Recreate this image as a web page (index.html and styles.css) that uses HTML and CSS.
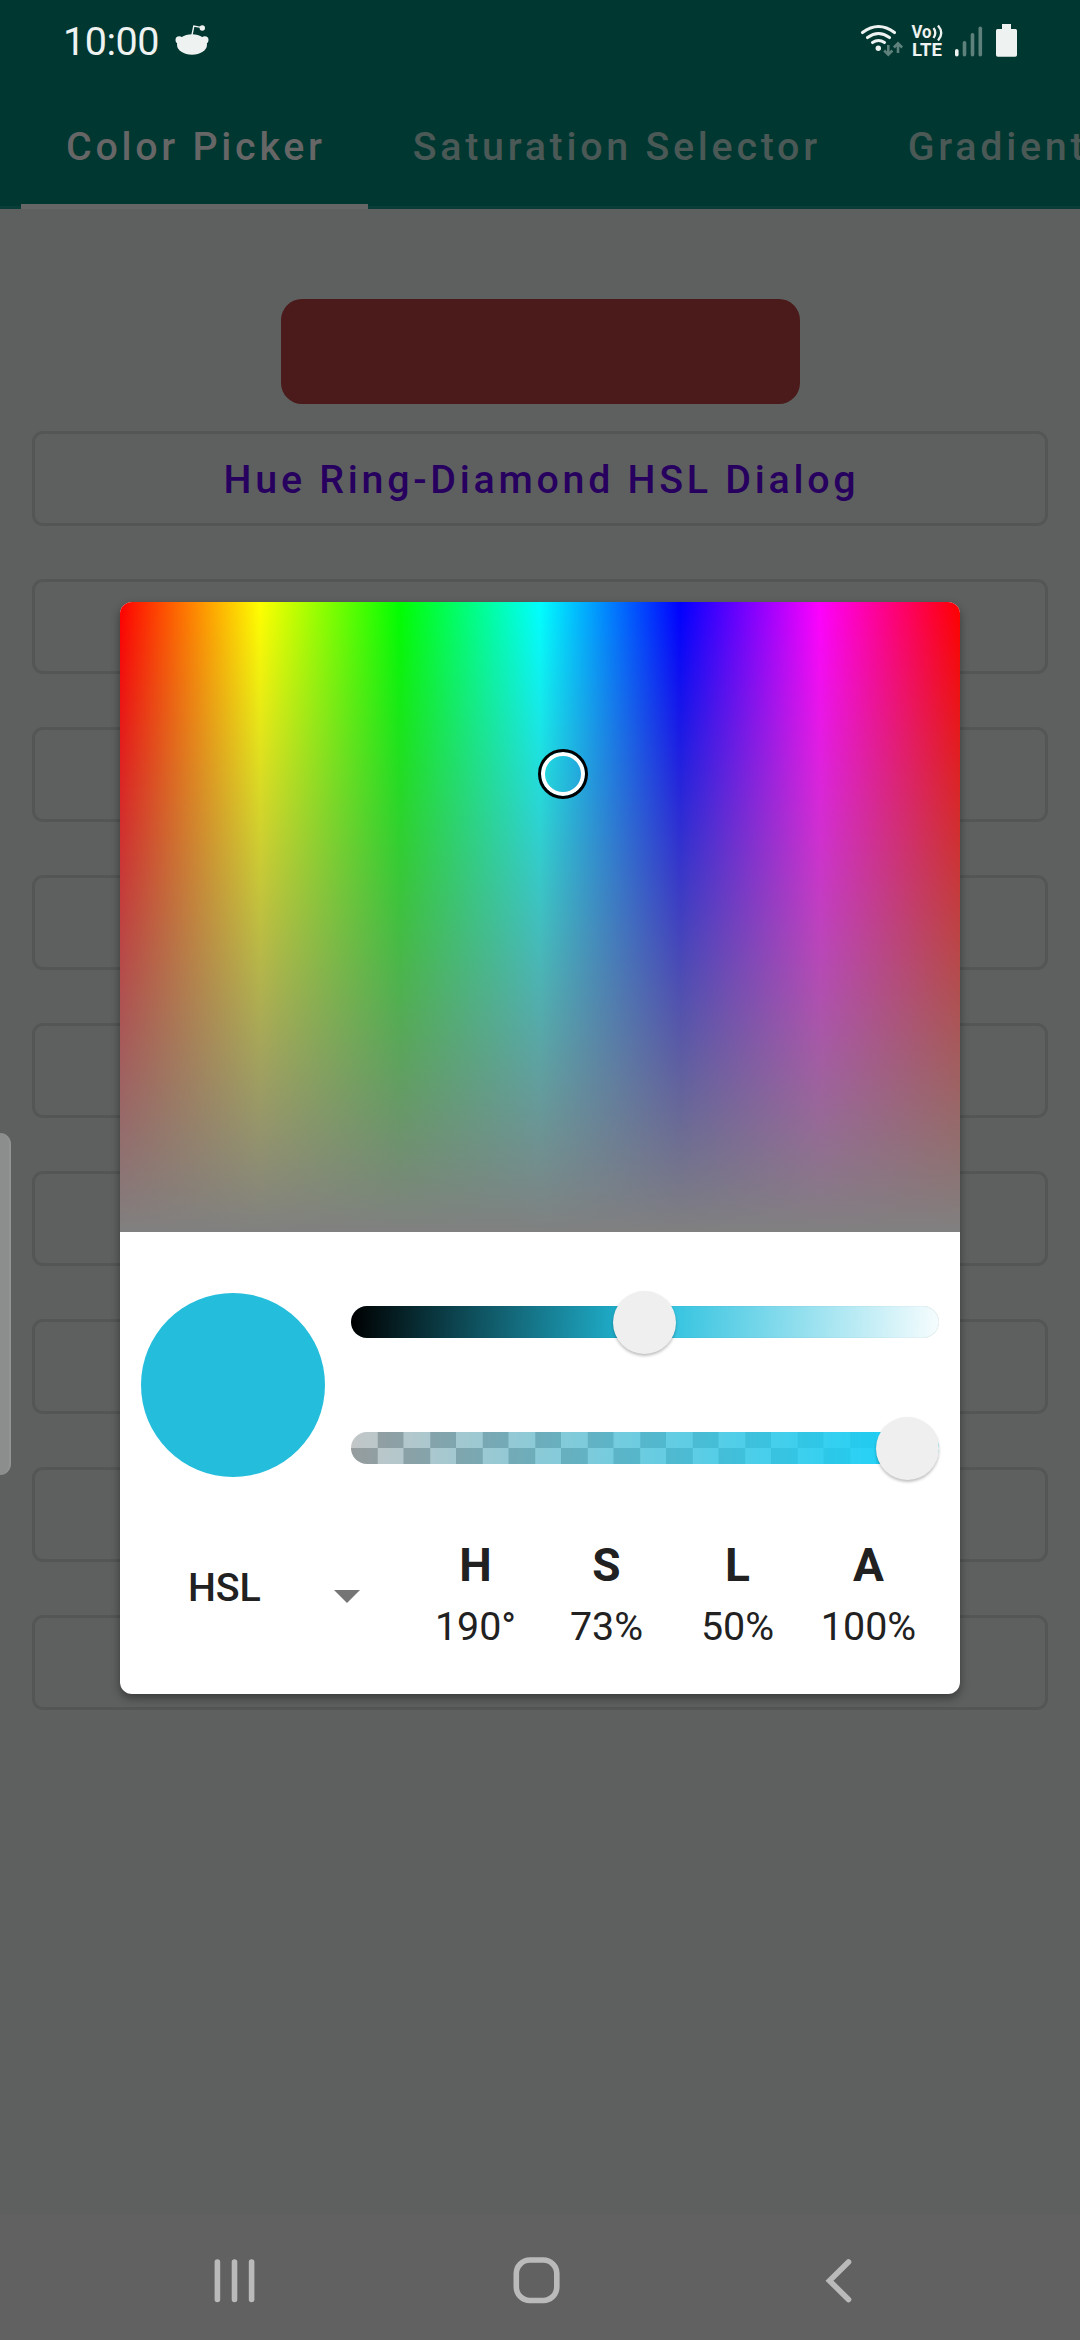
FILE: index.html
```html
<!DOCTYPE html>
<html lang="en">
<head>
<meta charset="utf-8">
<title>Color Picker</title>
<link rel="stylesheet" href="styles.css">
</head>
<body>
<div class="screen">
  <header class="appbar">
    <div class="statusbar">
      <span class="clock">10:00</span>
      <svg class="reddit" width="34" height="32" viewBox="0 0 34 32">
        <ellipse cx="17" cy="20.500" rx="15" ry="10.300" fill="#eef2f0"/>
        <circle cx="4.200" cy="16" r="3.700" fill="#eef2f0"/><circle cx="29.800" cy="16" r="3.700" fill="#eef2f0"/>
        <path d="M17 11 L18.800 2 L26 3.400" fill="none" stroke="#eef2f0" stroke-width="1.400"/>
        <circle cx="27.300" cy="4" r="2.700" fill="#eef2f0"/>
      </svg>
      <svg class="system" width="160" height="46" viewBox="860 14 160 46">
        <g fill="none" stroke="#eef2f0" stroke-width="3.100" stroke-linecap="round">
          <path d="M862.500 32.500 Q878.500 20.500 894.500 32.500"/>
          <path d="M867.500 37.500 Q878.500 29.500 889.500 37.500"/>
          <path d="M872.500 42.500 Q878.500 38.500 884.500 42.500"/>
        </g>
        <circle cx="878.300" cy="48.300" r="2.700" fill="#eef2f0"/>
        <g fill="none" stroke="#5f817c" stroke-width="2.600">
          <path d="M888.300 45 V54 M884.200 50.500 L888.300 54.600 L892.400 50.500"/>
          <path d="M898 53 V44 M893.900 47.500 L898 43.400 L902.100 47.500"/>
        </g>
        <text class="net" x="911.500" y="38.200" textLength="20" lengthAdjust="spacingAndGlyphs">Vo</text>
        <text class="net" x="912" y="55.800" textLength="30" lengthAdjust="spacingAndGlyphs">LTE</text>
        <g fill="none" stroke="#eef2f0" stroke-width="2.300"><path d="M933.500 28 Q937 32.500 933.500 38"/><path d="M938 25.500 Q944.500 33 938 40.500"/></g>
        <rect x="955" y="49" width="3.600" height="7.500" rx="1.800" fill="#eef2f0"/>
        <g fill="#5f817c"><rect x="962.700" y="41" width="3.600" height="15.500" rx="1.800"/><rect x="970.700" y="33" width="3.600" height="23.500" rx="1.800"/><rect x="978.500" y="26.500" width="3.600" height="30" rx="1.800"/></g>
        <path d="M1002 24 h9 v5 h4.500 q1.500 0 1.500 1.500 v24.500 q0 1.800 -1.800 1.800 h-17.400 q-1.800 0 -1.800 -1.800 v-24.500 q0 -1.500 1.500 -1.500 h4.500 z" fill="#eef2f0"/>
      </svg>
    </div>
    <nav class="tabs">
      <div class="tab selected">Color Picker</div>
      <div class="tab">Saturation Selector</div>
      <div class="tab">Gradient</div>
    </nav>
  </header>
  <main class="content">
    <div class="preview"></div>
    <div class="button">Hue Ring-Diamond HSL Dialog</div>
    <div class="button"></div><div class="button"></div><div class="button"></div><div class="button"></div>
    <div class="button"></div><div class="button"></div><div class="button"></div><div class="button"></div>
  </main>
  <footer class="navbar">
    <svg width="1080" height="126" viewBox="0 2214 1080 126" fill="none" stroke="#bababa" stroke-width="5.600" stroke-linecap="round">
      <path d="M217.400 2262 V2299.500 M234.500 2262 V2299.500 M251.600 2262 V2299.500"/>
      <rect x="516.300" y="2260" width="40.500" height="40.500" rx="13.500"/>
      <path d="M848.500 2262 L829.500 2280.700 L848.500 2299.500"/>
    </svg>
  </footer>
</div>
<div class="edge-handle"></div>
<section class="dialog">
  <div class="field"><div class="selector"></div></div>
  <div class="controls">
    <div class="swatch"></div>
    <div class="sliders">
      <div class="track lightness"><div class="thumb mid"></div></div>
      <div class="track alpha"><div class="thumb end"></div></div>
    </div>
  </div>
  <div class="values">
    <div class="mode"><span>HSL</span><svg width="26" height="13" viewBox="0 0 26 13"><path d="M0 0 H26 L13 13 Z" fill="#757575"/></svg></div>
    <div class="channel"><b>H</b><span>190°</span></div>
    <div class="channel"><b>S</b><span>73%</span></div>
    <div class="channel"><b>L</b><span>50%</span></div>
    <div class="channel"><b>A</b><span>100%</span></div>
  </div>
</section>
</body>
</html>
```
FILE: styles.css
```css
* { box-sizing: border-box; }
body { margin: 0; width: 1080px; height: 2340px; overflow: hidden; position: relative; font-family: Roboto, sans-serif; background: #5e605f; }
.screen { height: 2340px; display: flex; flex-direction: column; }
.appbar { height: 209px; background: #003731; box-shadow: inset 0 -3px #0a3d37; display: flex; flex-direction: column; }
.statusbar { height: 84px; display: flex; align-items: flex-start; padding: 14px 60px 0 63px; }
.clock { font-size: 39.500px; line-height: 48px; color: #eef2f0; width: 112px; letter-spacing: -.5px; margin-top: 4px; }
.reddit { margin-top: 10px; }
.system { margin-left: auto; }
.net { font: 700 17.500px Roboto, sans-serif; fill: #eef2f0; }
.tabs { flex: 1; display: flex; padding-left: 21px; overflow: hidden; white-space: nowrap; }
.tab { flex: none; padding: 0 42px 0 45px; line-height: 125px; font-size: 39.400px; font-weight: 500; letter-spacing: 3.720px; color: #4b5956; }
.selected { color: #666; box-shadow: inset 0 -5px #666; }
.content { flex: 1; display: flex; flex-direction: column; align-items: center; padding-top: 90px; }
.preview { width: 519px; height: 105px; border-radius: 21px; background: #4b1a1a; margin-bottom: 27px; }
.button { width: 1016px; height: 95px; margin-bottom: 53px; padding-left: 3px; border: 3px solid #545655; border-radius: 11px; text-align: center; line-height: 91px; font-size: 39.400px; font-weight: 500; letter-spacing: 3.720px; color: #27005f; }
.navbar { height: 126px; background: #616161; }
.navbar svg { display: block; }
.edge-handle { position: absolute; left: 0; top: 1133px; width: 11px; height: 342px; border-radius: 0 11px 11px 0; background: #8c8e8d; border-right: 2px solid #929493; }
.dialog { position: absolute; left: 120px; top: 602px; width: 840px; height: 1092px; background: #fff; border-radius: 12px; overflow: hidden; box-shadow: 0 4px 10px rgba(0,0,0,.4); }
.field { position: relative; height: 630px; background: linear-gradient(rgba(128,128,128,0), #808080), linear-gradient(90deg, red, yellow, lime, cyan, blue, magenta, red); }
.selector { position: absolute; left: 418px; top: 147px; width: 50px; height: 50px; border: 3px solid #000; border-radius: 50%; box-shadow: inset 0 0 0 4px #fff; }
.controls { display: flex; padding: 61px 21px 0; height: 271px; }
.swatch { width: 184px; height: 184px; border-radius: 50%; background: #24bddc; margin-right: 26px; }
.sliders { flex: 1; padding-top: 13px; display: flex; flex-direction: column; gap: 94px; }
.track { position: relative; height: 32px; border-radius: 16px; }
.lightness { background: linear-gradient(93deg, #000, #22bedd 50%, #fff 102%); box-shadow: inset 0 0 1px rgba(0,60,70,.3); }
.alpha { background: linear-gradient(93deg, rgba(20,210,250,.02), #14d2fa), conic-gradient(#999b9c 25%, #c6c6c6 0 50%, #999b9c 0 75%, #c6c6c6 0) 0 0 / 52.500px 32px; }
.thumb { position: absolute; top: -15px; width: 63px; height: 63px; border-radius: 50%; background: #efefef; box-shadow: 0 2px 3px rgba(0,0,0,.25); }
.mid { left: 262px; }
.end { right: 0; }
.values { display: flex; color: #212121; padding-right: 26px; }
.mode { width: 290px; display: flex; align-items: flex-start; font-size: 39.400px; font-weight: 500; padding: 60px 0 0 68px; }
.mode span { width: 146px; line-height: 50px; letter-spacing: -.2px; }
.mode svg { margin-top: 27px; }
.channel { flex: 1; display: flex; flex-direction: column; align-items: center; padding-top: 32px; }
.channel b { font-size: 46px; line-height: 60px; }
.channel span { font-size: 39.400px; line-height: 46px; margin-top: 9px; }
```
